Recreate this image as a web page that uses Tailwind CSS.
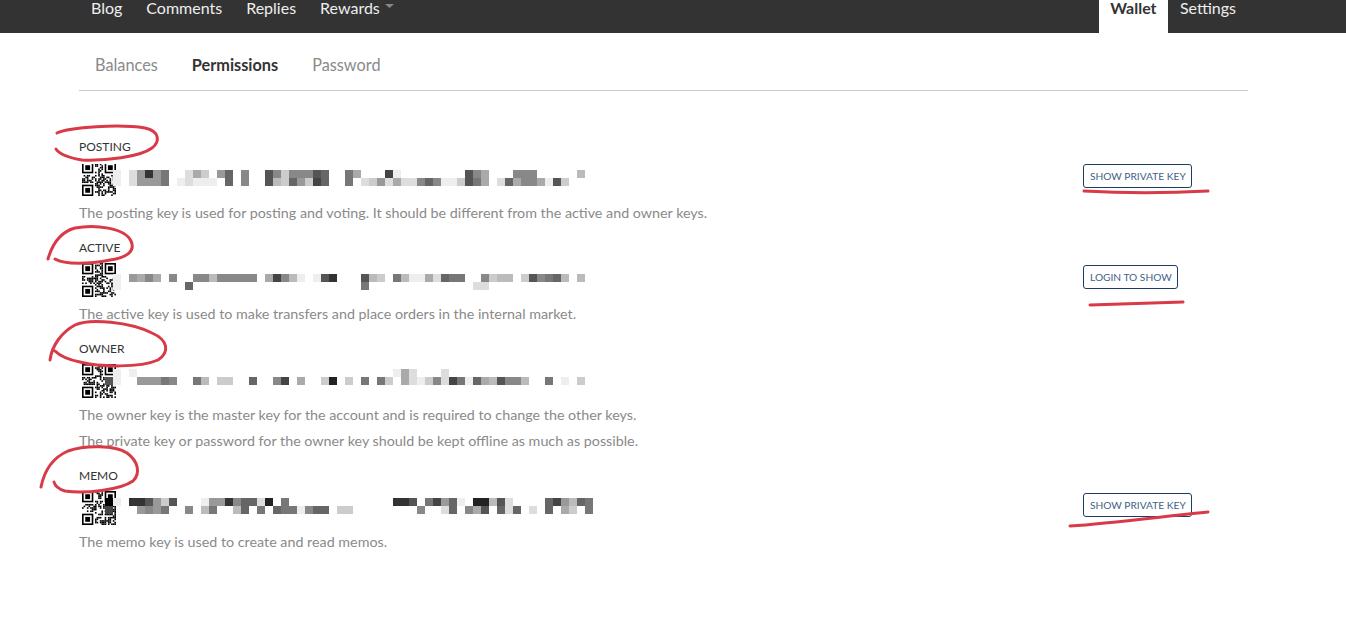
<!DOCTYPE html>
<html lang="en">

<head>
  <meta charset="UTF-8">
  <title>Permissions</title>
  <script src="https://cdn.jsdelivr.net/npm/@tailwindcss/browser@4"></script>
</head>

<body class="relative h-[643px] overflow-hidden bg-white font-['Lato','Noto_Sans',sans-serif] text-[14.3px]">
  <nav class="flex h-[33px] justify-between bg-[#333] pl-[79px] pr-[98px] text-[16px] leading-[16px] text-[#eee]">
    <div class="flex">
      <a class="px-[12px]">Blog</a>
      <a class="px-[12px]">Comments</a>
      <a class="px-[12px]">Replies</a>
      <a class="flex px-[12px]">Rewards
        <svg class="ml-[5px] mt-[4px] h-[4px] w-[9px]" viewBox="0 0 9 4"><polygon points="0,0 9,0 4.5,4" fill="#888" /></svg>
      </a>
    </div>
    <div class="flex">
      <a class="h-[33px] w-[69px] bg-white text-center font-bold text-[#333]">Wallet</a>
      <a class="px-[12px]">Settings</a>
    </div>
  </nav>

  <main class="ml-[79px] w-[1169px]">
    <div class="flex h-[58px] items-center gap-[34px] border-b border-[#ccc] px-[16px] pt-[7px] text-[16.3px] text-[#8a8a8a]">
      <a>Balances</a>
      <a class="font-bold text-[#333]">Permissions</a>
      <a>Password</a>
    </div>

    <section class="mt-[45px] mb-[11px]">
      <h4 class="h-[20px] text-[12px] leading-[22px] text-[#333]">POSTING</h4>
      <div class="mt-[6px] flex h-[34px] pl-[3px]">
        <div class="mt-[2px] h-[32px] w-[34px] shrink-0 overflow-hidden"><svg class="qr -mt-[2px] h-[34px] w-[34px]" data-seed="7"></svg></div>
        <svg class="mosaic -ml-[11px] mt-[8px] h-[16px] w-[488px]" data-a=".e.d9397..dac.96.8..58c88856..7a...4e........58a...888.....b" data-b=".e.d9997.edeee.6.8..5bc69c46..7.dc9dadd868eec57a.d6a88ae5c"></svg>
        <div class="ml-auto w-[165px] shrink-0"><button class="mt-[2px] h-[24px] rounded-[3px] border border-[#1c3d63] pl-[6px] pr-[5px] pt-[1px] text-[10.2px] text-[#3f5f85]">SHOW PRIVATE KEY</button></div>
      </div>
      <p class="mt-[4px] leading-[26px] text-[#8a8a8a]">The posting key is used for posting and voting. It should be different from the active and owner keys.</p>
    </section>

    <section class="mb-[11px]">
      <h4 class="h-[20px] text-[12px] leading-[22px] text-[#333]">ACTIVE</h4>
      <div class="mt-[6px] flex h-[34px] pl-[3px]">
        <svg class="qr h-[34px] w-[34px] shrink-0" data-seed="23"></svg>
        <svg class="mosaic -ml-[11px] mt-[11px] h-[16px] w-[488px]" data-a=".e.9a8a.8..88b88888.a48be.e53...5bc.7beead677..8cbb.c5876b.b" data-b=".e........6.....................7.............dd"></svg>
        <div class="ml-auto w-[165px] shrink-0"><button class="mt-[2px] h-[24px] rounded-[3px] border border-[#1c3d63] pl-[6px] pr-[5px] pt-[1px] text-[10.2px] text-[#3f5f85]">LOGIN TO SHOW</button></div>
      </div>
      <p class="mt-[4px] leading-[26px] text-[#8a8a8a]">The active key is used to make transfers and place orders in the internal market.</p>
    </section>

    <section class="mb-[11px]">
      <h4 class="h-[20px] text-[12px] leading-[22px] text-[#333]">OWNER</h4>
      <div class="mt-[6px] flex h-[34px] pl-[3px]">
        <svg class="qr h-[34px] w-[34px] shrink-0" data-seed="41"></svg>
        <svg class="mosaic -ml-[11px] mt-[5px] h-[16px] w-[488px]" data-a=".e.e................................ead...d" data-b="5e..99978..7b.cc..6..84.a..c2.c.7.7c.adec8d47e6ab588b..7.e.c"></svg>
      </div>
      <p class="mt-[4px] leading-[26px] text-[#8a8a8a]">The owner key is the master key for the account and is required to change the other keys.</p>
      <p class="leading-[26px] text-[#8a8a8a]">The private key or password for the owner key should be kept offline as much as possible.</p>
    </section>

    <section>
      <h4 class="h-[20px] text-[12px] leading-[22px] text-[#333]">MEMO</h4>
      <div class="mt-[6px] flex h-[34px] pl-[3px]">
        <svg class="qr h-[34px] w-[34px] shrink-0" data-seed="59"></svg>
        <svg class="mosaic -ml-[11px] mt-[7px] h-[16px] w-[488px]" data-a="0e.3359c5...e993866d2.7.............335.7496e.22b5d....649b67" data-b="4...9897..8.b7..b6.7.677e866.cc........8..d6.8a5.6d6.d.6.ac.7"></svg>
        <div class="ml-auto w-[165px] shrink-0"><button class="mt-[2px] h-[24px] rounded-[3px] border border-[#1c3d63] pl-[6px] pr-[5px] pt-[1px] text-[10.2px] text-[#3f5f85]">SHOW PRIVATE KEY</button></div>
      </div>
      <p class="mt-[4px] leading-[26px] text-[#8a8a8a]">The memo key is used to create and read memos.</p>
    </section>
  </main>

  <!-- red pen marks drawn over the screenshot -->
  <svg class="pointer-events-none absolute left-0 top-0 h-[643px] w-[1346px]" viewBox="0 0 1346 643" fill="none" stroke="#d93a48" stroke-width="3" stroke-linecap="round">
    <path d="M57 133 C70 127 120 124 145 128 C160 131 160 142 152 148 C140 157 105 161 82 160 C70 158 60 155 56 149" />
    <path d="M48 259 C52 245 60 232 75 228 C95 224 125 228 131 241 C136 252 125 258 110 260 C90 264 65 265 55 259" />
    <path d="M50 360 C52 345 62 332 75 325 C90 318 130 322 152 333 C168 340 170 352 158 360 C140 368 100 367 80 362 C70 360 60 356 55 351" />
    <path d="M41 487 C44 472 52 458 68 451 C85 445 115 445 127 453 C138 461 141 473 133 481 C120 490 85 494 65 491 C58 489 55 486 54 482" />
    <path d="M1084 191 C1120 193 1170 193 1208 191" />
    <path d="M1090 305 C1120 304 1150 303 1183 302" />
    <path d="M1070 526 C1115 523 1165 516 1208 512" />
  </svg>

  <script>
    const SVG_NS = "http://www.w3.org/2000/svg";

    function addRect(svg, x, y, w, h, fill) {
      const r = document.createElementNS(SVG_NS, "rect");
      r.setAttribute("x", x);
      r.setAttribute("y", y);
      r.setAttribute("width", w);
      r.setAttribute("height", h);
      r.setAttribute("fill", fill);
      svg.appendChild(r);
    }

    // blurred key: two rows of 8px cells, one hex digit of grey per cell
    document.querySelectorAll(".mosaic").forEach(svg => {
      svg.setAttribute("viewBox", "0 0 488 16");
      [svg.dataset.a, svg.dataset.b].forEach((row, y) => {
        [...row].forEach((c, x) => {
          if (c !== ".") addRect(svg, x * 8, y * 8, 8, 8, `#${c}${c}${c}`);
        });
      });
    });

    // 21x21 code: fixed finder squares, modules from a small seeded generator
    function inFinder(x, y) {
      return (x < 8 && y < 8) || (x > 12 && y < 8) || (x < 8 && y > 12);
    }

    document.querySelectorAll(".qr").forEach(svg => {
      svg.setAttribute("viewBox", "0 0 21 21");
      let s = Number(svg.dataset.seed);
      for (let y = 0; y < 21; y++) {
        for (let x = 0; x < 21; x++) {
          s = (s * 137 + 187) % 1009;
          if (!inFinder(x, y) && s % 2) addRect(svg, x, y, 1, 1, "#000");
        }
      }
      [[0, 0], [14, 0], [0, 14]].forEach(([x, y]) => {
        addRect(svg, x, y, 7, 7, "#000");
        addRect(svg, x + 1, y + 1, 5, 5, "#fff");
        addRect(svg, x + 2, y + 2, 3, 3, "#000");
      });
    });
  </script>
</body>

</html>
